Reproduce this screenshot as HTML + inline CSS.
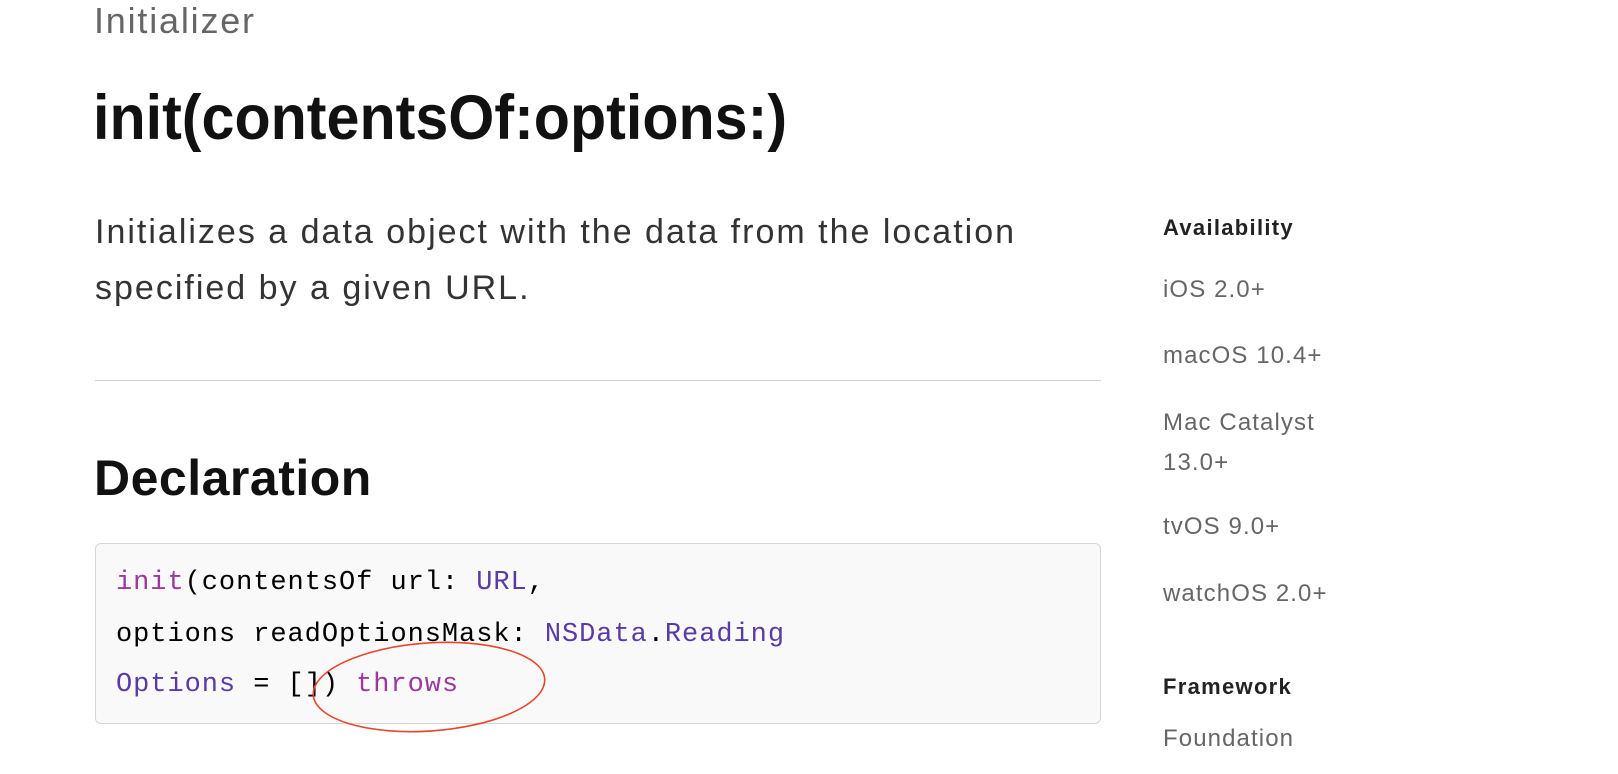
<!DOCTYPE html>
<html><head><meta charset="utf-8"><style>
html,body{margin:0;padding:0;background:#fff;width:1618px;height:774px;overflow:hidden;position:relative;font-family:"Liberation Sans",sans-serif}
.a{position:absolute;white-space:nowrap;transform-origin:0 0}
.code{font-family:"Liberation Mono",monospace;font-size:27px;letter-spacing:0.95px;color:#000}
.kw{color:#9b3a9b}.ty{color:#5b3aa8}
.side{font-size:24px;color:#666;left:1163px;letter-spacing:1.1px}
.sh{font-size:22px;font-weight:bold;color:#222;left:1163px;letter-spacing:1.3px}
</style></head><body>
<div class="a" style="left:94px;top:1px;font-size:36px;line-height:40px;color:#666;letter-spacing:1.8px">Initializer</div>
<div class="a" style="left:93px;top:82px;font-size:63px;line-height:72px;font-weight:bold;color:#111;transform:scaleX(0.94)">init(contentsOf:options:)</div>
<div class="a" style="left:95px;top:204px;font-size:34px;line-height:56px;color:#333;letter-spacing:2px">Initializes a data object with the data from the location<br>specified by a given URL.</div>
<div class="a" style="left:95px;top:380px;width:1006px;height:1px;background:#d2d2d2"></div>
<div class="a" style="left:94px;top:448px;font-size:50px;line-height:60px;font-weight:bold;color:#111;letter-spacing:0.5px">Declaration</div>
<div class="a" style="left:95px;top:543px;width:1004px;height:179px;background:#f9f9f9;border:1px solid #d6d6d6;border-radius:6px"></div>
<div class="a code" style="left:116px;top:566px;line-height:34px"><span class="kw">init</span>(contentsOf url: <span class="ty">URL</span>,</div>
<div class="a code" style="left:116px;top:618px;line-height:34px">options readOptionsMask: <span class="ty">NSData</span>.<span class="ty">Reading</span></div>
<div class="a code" style="left:116px;top:668px;line-height:34px"><span class="ty">Options</span> = []) <span class="kw">throws</span></div>
<svg class="a" style="left:0;top:0" width="1618" height="774"><ellipse cx="429" cy="687" rx="116" ry="44" transform="rotate(-4 429 687)" fill="none" stroke="#e8452c" stroke-width="1.6"/></svg>
<div class="a sh" style="top:213px;line-height:30px">Availability</div>
<div class="a side" style="top:275px;line-height:30px">iOS 2.0+</div>
<div class="a side" style="top:341px;line-height:30px">macOS 10.4+</div>
<div class="a side" style="top:403px;line-height:40px">Mac Catalyst<br>13.0+</div>
<div class="a side" style="top:512px;line-height:30px">tvOS 9.0+</div>
<div class="a side" style="top:579px;line-height:30px">watchOS 2.0+</div>
<div class="a sh" style="top:672px;line-height:30px">Framework</div>
<div class="a side" style="top:724px;line-height:30px">Foundation</div>
</body></html>
